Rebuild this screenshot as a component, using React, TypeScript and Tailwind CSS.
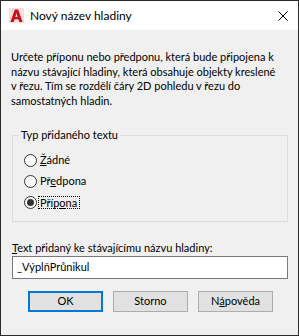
import React from "react";

function Radio({ checked }: { checked?: boolean }) {
  return (
    <span className="w-[13px] h-[13px] rounded-full border border-[#333333] bg-white flex items-center justify-center shrink-0">
      {checked && <span className="w-[7px] h-[7px] rounded-full bg-[#333333]" />}
    </span>
  );
}

export default function App() {
  return (
    <div
      className="w-[299px] h-[336px] border border-[#2b2b2b] bg-[#f0f0f0] flex flex-col text-[11px] text-black"
      style={{ fontFamily: 'Lato, "Noto Sans", sans-serif' }}
    >
      <div className="h-[29px] bg-white flex items-center shrink-0 text-[12px]">
        <svg className="ml-[8px]" width="15" height="15" viewBox="0 0 16 16">
          <rect x="0" y="0" width="16" height="16" fill="#f6dede" />
          <polygon points="1.5,15 6.2,1.5 9.8,1.5 14.5,15 11,15 10,12 6,12 5,15" fill="#c4151c" />
          <polygon points="6.8,9.5 9.2,9.5 8,5.5" fill="#f6dede" />
        </svg>
        <span className="ml-[6px]">Nový název hladiny</span>
        <svg className="ml-auto mr-[10px]" width="10" height="10" viewBox="0 0 10 10">
          <path d="M0.5 0.5 L9.5 9.5 M9.5 0.5 L0.5 9.5" stroke="#000" strokeWidth="1" />
        </svg>
      </div>
      <div className="flex flex-col px-[11px]">
        <p className="pt-[20px] -ml-[1px] leading-[14.5px] whitespace-nowrap">
          Určete příponu nebo předponu, která bude připojena k<br />
          názvu stávající hladiny, která obsahuje objekty kreslené<br />
          v řezu. Tím se rozdělí čáry 2D pohledu v řezu do<br />
          samostatných hladin.
        </p>
        <div className="mt-[27px] w-[276px] h-[87px] border border-[#dcdcdc] flex flex-col">
          <span className="-mt-[8px] ml-[6px] px-[2px] self-start bg-[#f0f0f0] leading-[14px]">Typ přidaného textu</span>
          <div className="flex flex-col pl-[11px] mt-[8px]">
            <div className="flex items-center h-[21px]">
              <Radio />
              <span className="ml-[3px]"><span className="underline">Ž</span>ádné</span>
            </div>
            <div className="flex items-center h-[21px]">
              <Radio />
              <span className="ml-[3px]">Př<span className="underline">e</span>dpona</span>
            </div>
            <div className="flex items-center h-[21px]">
              <Radio checked />
              <span className="ml-[1px] h-[13px] pl-[1px] pr-[2px] border border-dotted border-black leading-[11px] flex items-center">Příp<span className="underline">o</span>na</span>
            </div>
          </div>
        </div>
        <div className="mt-[18px] leading-[15px]"><span className="underline">T</span>ext přidaný ke stávajícímu názvu hladiny:</div>
        <div className="mt-[1px] w-[276px] h-[23px] border border-[#7a7a7a] bg-white flex items-center px-[4px]">
          _VýplňPrůnikul
        </div>
      </div>
      <div className="flex pl-[27px] gap-[10px] mt-[12px]">
        <button className="w-[75px] h-[21px] border-2 border-[#0078d7] bg-[#e1e1e1] flex items-center justify-center">OK</button>
        <button className="w-[75px] h-[21px] border border-[#adadad] bg-[#e1e1e1] flex items-center justify-center">Storno</button>
        <button className="w-[75px] h-[21px] border border-[#adadad] bg-[#e1e1e1] flex items-center justify-center">N<span className="underline">á</span>pověda</button>
      </div>
    </div>
  );
}
